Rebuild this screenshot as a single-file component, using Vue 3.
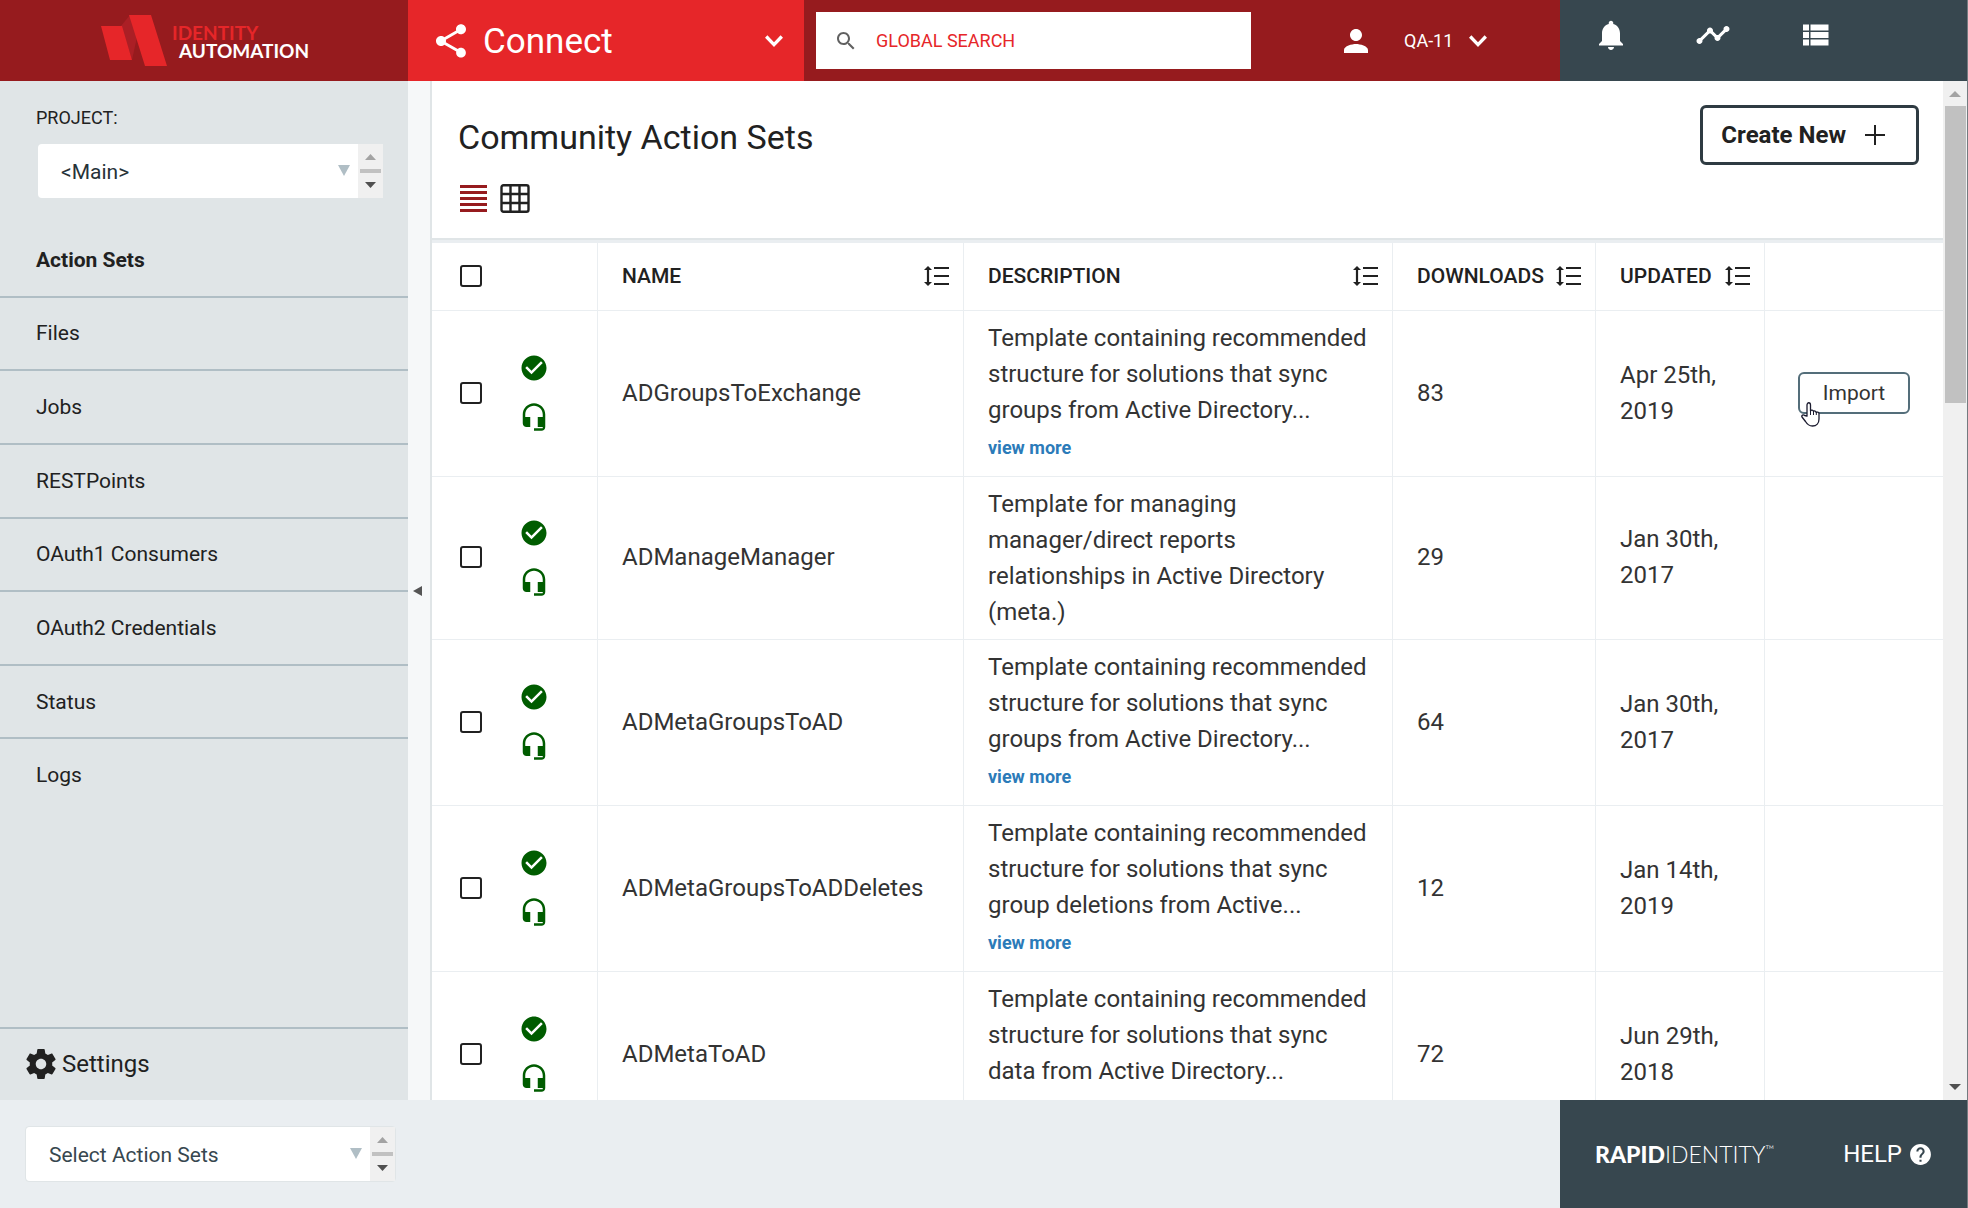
<script setup>
import { ref } from 'vue'

const menu = ['Action Sets', 'Files', 'Jobs', 'RESTPoints', 'OAuth1 Consumers', 'OAuth2 Credentials', 'Status', 'Logs']
const active = ref('Action Sets')

const columns = [
  { key: 'name', label: 'NAME' },
  { key: 'description', label: 'DESCRIPTION' },
  { key: 'downloads', label: 'DOWNLOADS' },
  { key: 'updated', label: 'UPDATED' },
]

const rows = [
  { name: 'ADGroupsToExchange', text: 'Template containing recommended structure for solutions that sync groups from Active Directory...', more: true, downloads: 83, updated: 'Apr 25th, 2019', hover: true },
  { name: 'ADManageManager', text: 'Template for managing manager/direct reports relationships in Active Directory (meta.)', more: false, downloads: 29, updated: 'Jan 30th, 2017' },
  { name: 'ADMetaGroupsToAD', text: 'Template containing recommended structure for solutions that sync groups from Active Directory...', more: true, downloads: 64, updated: 'Jan 30th, 2017' },
  { name: 'ADMetaGroupsToADDeletes', text: 'Template containing recommended structure for solutions that sync group deletions from Active...', more: true, downloads: 12, updated: 'Jan 14th, 2019' },
  { name: 'ADMetaToAD', text: 'Template containing recommended structure for solutions that sync data from Active Directory...', more: true, downloads: 72, updated: 'Jun 29th, 2018' },
]
</script>

<template>
  <div class="app">
    <header class="topbar">
      <a class="brand" href="#" aria-label="Identity Automation">
        <svg class="brand-mark" width="66" height="52" viewBox="0 0 66 52">
          <path fill="#ab1f25" d="M20 11 29 0l7 22-5 23z" />
          <path fill="#e62629" d="M0 11h21l10 34H9zM28 0h22l16 51H44z" />
        </svg>
        <span class="brand-text">
          <span class="brand-top">IDENTITY</span>
          <span class="brand-bottom">AUTOMATION</span>
        </span>
      </a>
      <button class="module" type="button">
        <svg width="40" height="40" viewBox="0 0 24 24"><path fill="#fff" d="M18 16.080c-.76 0-1.440.3-1.960.77L8.910 12.700c.05-.23.09-.46.09-.7s-.04-.47-.09-.7l7.050-4.110c.54.5 1.250.81 2.040.81 1.660 0 3-1.340 3-3s-1.340-3-3-3-3 1.340-3 3c0 .24.04.47.09.7L8.040 9.810C7.500 9.310 6.790 9 6 9c-1.660 0-3 1.340-3 3s1.340 3 3 3c.79 0 1.500-.31 2.040-.81l7.120 4.160c-.05.21-.08.43-.08.65 0 1.610 1.310 2.920 2.920 2.920s2.920-1.310 2.920-2.920-1.310-2.920-2.920-2.920z" /></svg>
        <span class="module-name">Connect</span>
        <svg width="36" height="36" viewBox="0 0 24 24"><path fill="none" stroke="#fff" stroke-width="2.200" d="M6.800 9 12 14.400 17.200 9" /></svg>
      </button>
      <label class="search">
        <svg width="24" height="24" viewBox="0 0 24 24"><path fill="#616161" d="M15.500 14h-.79l-.28-.27C15.410 12.590 16 11.110 16 9.500 16 5.910 13.090 3 9.500 3S3 5.910 3 9.500 5.910 16 9.500 16c1.610 0 3.090-.59 4.230-1.570l.27.28v.79l5 4.990L20.490 19l-4.990-5zm-6 0C7.010 14 5 11.990 5 9.500S7.010 5 9.500 5 14 7.010 14 9.500 11.990 14 9.500 14z" /></svg>
        <input type="text" placeholder="GLOBAL SEARCH" aria-label="Global search" />
      </label>
      <button class="user" type="button">
        <svg width="36" height="36" viewBox="0 0 24 24"><path fill="#fff" d="M12 12c2.210 0 4-1.790 4-4s-1.790-4-4-4-4 1.790-4 4 1.790 4 4 4zm0 2c-2.670 0-8 1.340-8 4v2h16v-2c0-2.660-5.330-4-8-4z" /></svg>
        <span class="user-name">QA-11</span>
        <svg width="36" height="36" viewBox="0 0 24 24"><path fill="none" stroke="#fff" stroke-width="2.200" d="M6.800 9 12 14.400 17.200 9" /></svg>
      </button>
      <nav class="tools" aria-label="Tools">
        <button type="button" aria-label="Notifications">
          <svg width="36" height="36" viewBox="0 0 24 24"><path fill="#fff" d="M12 22c1.100 0 2-.9 2-2h-4c0 1.100.89 2 2 2zm6-6v-5c0-3.070-1.640-5.640-4.500-6.320V4c0-.83-.67-1.500-1.500-1.500s-1.500.67-1.500 1.500v.68C7.630 5.360 6 7.920 6 11v5l-2 2v1h16v-1l-2-2z" /></svg>
        </button>
        <button type="button" aria-label="Activity">
          <svg width="36" height="36" viewBox="0 0 24 24"><path fill="#fff" d="M23 8c0 1.100-.9 2-2 2-.18 0-.35-.02-.51-.07l-3.560 3.550c.05.16.07.34.07.52 0 1.100-.9 2-2 2s-2-.9-2-2c0-.18.02-.36.07-.52l-2.550-2.550c-.16.05-.34.07-.52.07s-.36-.02-.52-.07l-4.550 4.560c.05.16.07.33.07.51 0 1.100-.9 2-2 2s-2-.9-2-2 .9-2 2-2c.18 0 .35.02.51.07l4.560-4.550C8.020 9.360 8 9.180 8 9c0-1.100.9-2 2-2s2 .9 2 2c0 .18-.02.36-.07.52l2.550 2.550c.16-.05.34-.07.52-.07s.36.02.52.07l3.550-3.560C19.020 8.350 19 8.180 19 8c0-1.100.9-2 2-2s2 .9 2 2z" /></svg>
        </button>
        <button type="button" aria-label="List">
          <svg width="36" height="36" viewBox="0 0 24 24"><path fill="#fff" d="M4 14h4v-4H4v4zm0 5h4v-4H4v4zM4 9h4V5H4v4zm5 5h12v-4H9v4zm0 5h12v-4H9v4zM9 5v4h12V5H9z" /></svg>
        </button>
      </nav>
    </header>

    <div class="body">
      <aside class="sidebar">
        <label class="project-label" for="project">PROJECT:</label>
        <div class="picker">
          <div class="picker-field">
            <select id="project"><option>&lt;Main&gt;</option></select>
            <svg class="caret" width="12" height="11" viewBox="0 0 12 11"><path fill="#b0bec5" d="M0 0h12L6 11z" /></svg>
          </div>
          <svg class="stepper" width="25" height="54" viewBox="0 0 25 54"><path fill="#f0f0f0" d="M0 0h25v54H0z" /><path fill="#a3a3a3" d="M7 16h11l-5.500-6z" /><path fill="#c1c1c1" d="M2 25h21v4H2z" /><path fill="#505050" d="M7 38h11l-5.500 6z" /></svg>
        </div>
        <ul class="menu">
          <li v-for="item in menu" :key="item">
            <a href="#" :class="{ active: item === active }" @click.prevent="active = item">{{ item }}</a>
          </li>
        </ul>
        <a class="settings" href="#">
          <svg width="36" height="36" viewBox="0 0 24 24"><path fill="#212121" d="M19.430 12.980c.04-.32.07-.64.07-.98s-.03-.66-.07-.98l2.110-1.650c.19-.15.24-.42.12-.64l-2-3.460c-.12-.22-.39-.3-.61-.22l-2.490 1c-.52-.4-1.080-.73-1.690-.98l-.38-2.650C14.460 2.180 14.250 2 14 2h-4c-.25 0-.46.18-.49.42l-.38 2.650c-.61.25-1.170.59-1.690.98l-2.490-1c-.23-.09-.49 0-.61.22l-2 3.460c-.13.22-.07.49.12.64l2.110 1.650c-.04.32-.07.65-.07.98s.03.66.07.98l-2.110 1.650c-.19.15-.24.42-.12.64l2 3.460c.12.22.39.3.61.22l2.490-1c.52.4 1.080.73 1.690.98l.38 2.650c.03.24.24.42.49.42h4c.25 0 .46-.18.49-.42l.38-2.650c.61-.25 1.170-.59 1.690-.98l2.490 1c.23.09.49 0 .61-.22l2-3.460c.12-.22.07-.49-.12-.64l-2.110-1.650zM12 15.500c-1.930 0-3.500-1.570-3.500-3.500s1.570-3.500 3.500-3.500 3.500 1.570 3.500 3.500-1.570 3.500-3.500 3.500z" /></svg>
          <span>Settings</span>
        </a>
      </aside>

      <button class="collapse" type="button" aria-label="Collapse sidebar">
        <svg width="9" height="10" viewBox="0 0 9 10"><path fill="#555" d="M9 0v10L0 5z" /></svg>
      </button>

      <main class="content">
        <section class="heading">
          <div class="heading-row">
            <h1>Community Action Sets</h1>
            <button class="create" type="button">
              <span>Create New</span>
              <svg width="22" height="22" viewBox="0 0 22 22"><path stroke="#212121" stroke-width="2" d="M11 1v20M1 11h20" /></svg>
            </button>
          </div>
          <div class="views">
            <button type="button" aria-label="List view">
              <svg width="27" height="29" viewBox="0 0 27 29"><path stroke="#961b1e" stroke-width="3" d="M0 2.500h27M0 8.500h27M0 14.500h27M0 20.500h27M0 26.500h27" /></svg>
            </button>
            <button type="button" aria-label="Grid view">
              <svg width="30" height="29" viewBox="0 0 30 29"><path fill="none" stroke="#212121" stroke-width="2.400" d="M10.500 1v27M19.500 1v27M1 10h28M1 19h28" /><rect x="1.500" y="1.200" width="27" height="26.600" rx="2" fill="none" stroke="#212121" stroke-width="2.400" /></svg>
            </button>
          </div>
        </section>

        <table class="grid">
          <colgroup>
            <col class="c-check" /><col class="c-name" /><col /><col class="c-downloads" /><col class="c-updated" /><col class="c-action" />
          </colgroup>
          <thead>
            <tr>
              <th class="check"><input type="checkbox" aria-label="Select all" /></th>
              <th v-for="col in columns" :key="col.key">
                <span class="th">
                  {{ col.label }}
                  <svg width="25" height="20" viewBox="0 0 25 20"><path stroke="#212121" stroke-width="2.200" d="M10 2h15M10 10h15M10 18h15M4 3v14" /><path fill="#212121" d="M4 0l4 4H0zM4 20l4-4H0z" /></svg>
                </span>
              </th>
              <th aria-label="Actions"></th>
            </tr>
          </thead>
          <tbody>
            <tr v-for="row in rows" :key="row.name">
              <td class="check">
                <div class="marks">
                  <input type="checkbox" :aria-label="'Select ' + row.name" />
                  <span class="badges">
                    <svg width="30" height="30" viewBox="0 0 24 24"><path fill="#005c00" d="M12 2C6.480 2 2 6.480 2 12s4.480 10 10 10 10-4.480 10-10S17.520 2 12 2zm-2 15l-5-5 1.410-1.410L10 14.170l7.590-7.590L19 8l-9 9z" /></svg>
                    <svg width="30" height="30" viewBox="0 0 24 24"><path fill="#005c00" d="M12 1c-4.970 0-9 4.030-9 9v7c0 1.660 1.340 3 3 3h3v-8H5v-2c0-3.870 3.130-7 7-7s7 3.130 7 7v2h-4v8h4v1h-7v2h6c1.660 0 3-1.340 3-3V10c0-4.970-4.030-9-9-9z" /></svg>
                  </span>
                </div>
              </td>
              <td>{{ row.name }}</td>
              <td class="description">
                <p>{{ row.text }}</p>
                <a v-if="row.more" class="more" href="#">view more</a>
              </td>
              <td>{{ row.downloads }}</td>
              <td>{{ row.updated }}</td>
              <td class="action">
                <div v-if="row.hover" class="import-wrap">
                  <button class="import" type="button">Import</button>
                  <svg class="pointer" width="19" height="25" viewBox="0 0 19 25"><path fill="#fff" stroke="#1b1b2f" stroke-width="1.300" stroke-linejoin="round" d="M6 14V3c0-3 3.500-3 3.500 0v6c.5-1.500 3-1 3 .5.500-1 2.700-.6 2.700 1 .6-.8 2.800-.4 2.800 1.200V17c0 4-2.500 7-6.500 7-3.500 0-5.500-2-7-4.500L1 15c-.8-1.500 1.200-3 2.700-1.500z" /><path stroke="#1b1b2f" d="M9.500 8v5M12.500 9v4M15.300 10v3" /></svg>
                </div>
              </td>
            </tr>
          </tbody>
        </table>
      </main>

      <div class="scrollbar" aria-hidden="true">
        <svg width="12" height="6" viewBox="0 0 12 6"><path fill="#a3a3a3" d="M0 6h12L6 0z" /></svg>
        <div class="track"><div class="thumb"></div></div>
        <svg width="12" height="6" viewBox="0 0 12 6"><path fill="#505050" d="M0 0h12L6 6z" /></svg>
      </div>
    </div>

    <footer class="bottom">
      <div class="picker outlined">
        <div class="picker-field">
          <select aria-label="Select Action Sets"><option>Select Action Sets</option></select>
          <svg class="caret" width="12" height="11" viewBox="0 0 12 11"><path fill="#b0bec5" d="M0 0h12L6 11z" /></svg>
        </div>
        <svg class="stepper" width="25" height="54" viewBox="0 0 25 54"><path fill="#f0f0f0" d="M0 0h25v54H0z" /><path fill="#a3a3a3" d="M7 16h11l-5.500-6z" /><path fill="#c1c1c1" d="M2 25h21v4H2z" /><path fill="#505050" d="M7 38h11l-5.500 6z" /></svg>
      </div>
      <div class="product">
        <span class="rapid"><b>RAPID</b>IDENTITY<sup>™</sup></span>
        <a class="help" href="#">
          HELP
          <svg width="25" height="25" viewBox="0 0 24 24"><path fill="#fff" d="M12 2C6.480 2 2 6.480 2 12s4.480 10 10 10 10-4.480 10-10S17.520 2 12 2zm1 17h-2v-2h2v2zm2.070-7.750l-.9.920C13.450 12.900 13 13.500 13 15h-2v-.5c0-1.100.45-2.100 1.170-2.830l1.240-1.260c.37-.36.590-.86.590-1.410 0-1.100-.9-2-2-2s-2 .9-2 2H8c0-2.210 1.790-4 4-4s4 1.790 4 4c0 .88-.36 1.680-.93 2.250z" /></svg>
        </a>
      </div>
    </footer>
  </div>
</template>

<style>
body {
  margin: 0;
  overflow: hidden;
}
</style>

<style scoped>
* {
  box-sizing: border-box;
}
svg {
  display: block;
  flex: none;
}
button {
  font: inherit;
  color: inherit;
  background: none;
  border: 0;
  padding: 0;
  cursor: pointer;
}
a {
  color: inherit;
  text-decoration: none;
}
.app {
  height: 100vh;
  display: flex;
  flex-direction: column;
  border-right: 1px solid #737b80;
  font-family: Roboto, sans-serif;
  font-size: 21px;
  color: #212121;
  background: #fff;
}

/* top bar */
.topbar {
  display: flex;
  align-items: stretch;
  height: 81px;
  flex: none;
  background: #961b1e;
  color: #fff;
}
.brand {
  width: 408px;
  display: flex;
  align-items: center;
  padding-left: 101px;
}
.brand-text {
  display: flex;
  flex-direction: column;
  margin: 3px 0 0 5px;
  font: 700 19px/18px Lato, sans-serif;
}
.brand-top {
  color: #e62629;
}
.brand-bottom {
  padding-left: 7px;
}
.module {
  width: 396px;
  display: flex;
  align-items: center;
  padding: 0 12px 0 23px;
  background: #e62629;
}
.module-name {
  flex: 1;
  padding: 2px 0 0 12px;
  text-align: left;
  font-size: 35px;
}
.search {
  flex: 1;
  display: flex;
  align-items: center;
  gap: 18px;
  margin: 12px 0 12px 12px;
  padding: 0 18px;
  background: #fff;
}
.search input {
  flex: 1;
  min-width: 0;
  border: 0;
  padding: 0;
  outline: 0;
  font: 18px Roboto, sans-serif;
  color: #212121;
}
.search input::placeholder {
  color: #e62629;
  opacity: 1;
}
.user {
  width: 309px;
  display: flex;
  align-items: center;
  padding-left: 87px;
}
.user-name {
  margin: 0 7px 0 30px;
  font-size: 18px;
}
.tools {
  width: 407px;
  display: flex;
  align-items: flex-start;
  gap: 66px;
  padding: 17px 0 0 33px;
  background: #37474f;
}

/* body */
.body {
  flex: 1;
  min-height: 0;
  display: flex;
}
.sidebar {
  width: 408px;
  flex: none;
  display: flex;
  flex-direction: column;
  padding-top: 25px;
  background: #e0e5e7;
}
.project-label {
  padding-left: 36px;
  font-size: 18px;
  line-height: 24px;
}
.picker {
  display: flex;
  width: 345px;
  margin: 14px 0 0 38px;
}
.picker-field {
  position: relative;
  flex: 1;
  display: flex;
}
.picker select {
  appearance: none;
  width: 100%;
  height: 54px;
  padding: 2px 23px 0;
  border: 0;
  border-radius: 4px 0 0 4px;
  background: #fff;
  font: 21px Roboto, sans-serif;
  color: #263238;
}
.caret {
  position: absolute;
  right: 8px;
  top: 21px;
}
.menu {
  list-style: none;
  display: flex;
  flex-direction: column;
  height: 587px;
  margin: 26px 0 0;
  padding: 0;
}
.menu li {
  flex: 1;
  display: flex;
  border-bottom: 2px solid #b0bec5;
}
.menu li:last-child {
  border-bottom: 0;
}
.menu a {
  flex: 1;
  display: flex;
  align-items: center;
  padding-left: 36px;
}
.menu .active {
  font-weight: 700;
}
.settings {
  display: flex;
  align-items: center;
  gap: 3px;
  height: 73px;
  margin-top: auto;
  padding: 0 0 2px 23px;
  border-top: 2px solid #b0bec5;
  font-size: 24px;
}
.collapse {
  width: 24px;
  flex: none;
  padding-left: 5px;
  background: #f6f8f9;
  border-right: 2px solid #e0e5e7;
}

/* content */
.content {
  flex: 1;
  min-width: 0;
  overflow: hidden;
}
.heading {
  height: 162px;
  padding: 24px 24px 0 26px;
  border-bottom: 3px solid #eaeef1;
  box-shadow: inset 0 -2px #e0e5e7;
}
.heading-row {
  display: flex;
  justify-content: space-between;
  align-items: center;
}
h1 {
  margin: 0;
  padding-top: 3px;
  font-size: 34px;
  font-weight: 400;
}
.create {
  display: flex;
  align-items: center;
  gap: 18px;
  height: 60px;
  padding: 0 30px 0 18px;
  border: 3px solid #2f3b42;
  border-radius: 6px;
  font-size: 24px;
  font-weight: 700;
}
.views {
  display: flex;
  gap: 13px;
  margin: 19px 0 0 2px;
}
.grid {
  width: 100%;
  table-layout: fixed;
  border-collapse: separate;
  border-spacing: 0;
  font-size: 24px;
  line-height: 36px;
  color: #333;
}
.c-check {
  width: 166px;
}
.c-name {
  width: 366px;
}
.c-downloads {
  width: 203px;
}
.c-updated {
  width: 169px;
}
.c-action {
  width: 178px;
}
th,
td {
  padding: 9px 24px 11px;
  text-align: left;
  vertical-align: middle;
  border-right: 1px solid #eaeef1;
  border-bottom: 1px solid #eaeef1;
}
th:last-child,
td:last-child {
  border-right: 0;
}
th {
  height: 68px;
  padding: 0 14px 2px 24px;
  font-size: 21px;
  font-weight: 500;
  color: #212121;
}
.description {
  padding-bottom: 9px;
}
.th {
  display: flex;
  align-items: center;
  justify-content: space-between;
}
.check {
  padding-left: 28px;
  padding-right: 0;
}
.check input {
  appearance: none;
  display: block;
  width: 22px;
  height: 22px;
  margin: 0;
  border: 2px solid #212121;
  border-radius: 3px;
  background: #fff;
}
.marks {
  display: flex;
  align-items: center;
  gap: 37px;
}
.badges {
  display: grid;
  gap: 19px;
}
p {
  margin: 0;
}
.more {
  display: block;
  font-size: 18px;
  font-weight: 700;
  line-height: 39px;
  color: #2b7bb9;
}
.action {
  padding-left: 33px;
}
.import-wrap {
  position: relative;
}
.import {
  display: block;
  width: 112px;
  height: 42px;
  border: 2px solid #546e7a;
  border-radius: 6px;
  font-size: 21px;
}
.pointer {
  position: absolute;
  left: 3px;
  top: 30px;
}
.scrollbar {
  width: 24px;
  flex: none;
  display: flex;
  flex-direction: column;
  align-items: center;
  gap: 9px;
  padding: 10px 0;
  background: #f0f0f0;
}
.track {
  flex: 1;
  align-self: stretch;
  padding: 0 1px 0 2px;
}
.thumb {
  height: 297px;
  background: #c1c1c1;
}

/* footer */
.bottom {
  height: 108px;
  flex: none;
  display: flex;
  justify-content: space-between;
  background: #eaeef1;
}
.outlined {
  width: 371px;
  height: 56px;
  margin: 26px 0 0 25px;
  border: 1px solid #e0e5e7;
  border-radius: 4px;
}
.outlined select {
  color: #37474f;
}
.product {
  width: 407px;
  display: flex;
  align-items: center;
  justify-content: space-between;
  padding: 0 34px 0 35px;
  background: #37474f;
  color: #fff;
}
.rapid {
  font: 300 23px/24px Lato, sans-serif;
}
.rapid b {
  font-weight: 900;
}
.rapid sup {
  font-size: 12px;
  line-height: 12px;
}
.help {
  display: flex;
  align-items: center;
  gap: 6px;
  font-size: 24px;
}
</style>
